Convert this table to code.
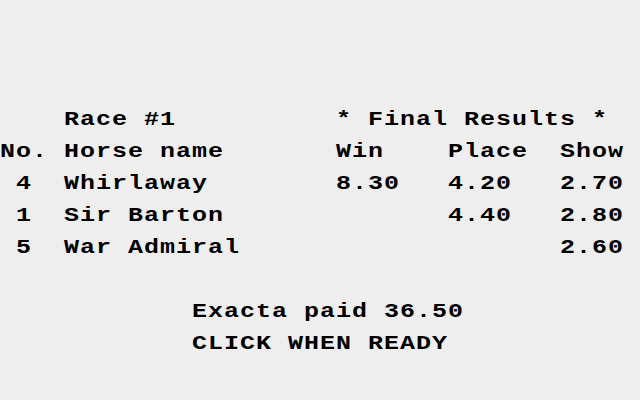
// each row: [column, text] pairs on a 40-column grid of 16px cells
const rows: [number, string][][] = [
  [[4, "Race #1"], [21, "* Final Results *"]],
  [[0, "No."], [4, "Horse name"], [21, "Win"], [28, "Place"], [35, "Show"]],
  [[1, "4"], [4, "Whirlaway"], [21, "8.30"], [28, "4.20"], [35, "2.70"]],
  [[1, "1"], [4, "Sir Barton"], [28, "4.40"], [35, "2.80"]],
  [[1, "5"], [4, "War Admiral"], [35, "2.60"]],
  [],
  [[12, "Exacta paid 36.50"]],
  [[12, "CLICK WHEN READY"]],
];

function toLine(cells: [number, string][]) {
  let s = "";
  for (const [col, text] of cells) {
    s = s.padEnd(col, " ") + text;
  }
  return s;
}

export default function App() {
  return (
    <div className="w-[640px] h-[400px] bg-[#eeeeee] text-black overflow-hidden pt-[104px]">
      {rows.map((r, i) => (
        <div
          key={i}
          className="h-[32px] leading-[32px] whitespace-pre text-[20px] tracking-[0.8px] font-bold scale-x-125 origin-left"
          style={{ fontFamily: '"Liberation Mono", "DejaVu Sans Mono", monospace' }}
        >
          {toLine(r)}
        </div>
      ))}
    </div>
  );
}
